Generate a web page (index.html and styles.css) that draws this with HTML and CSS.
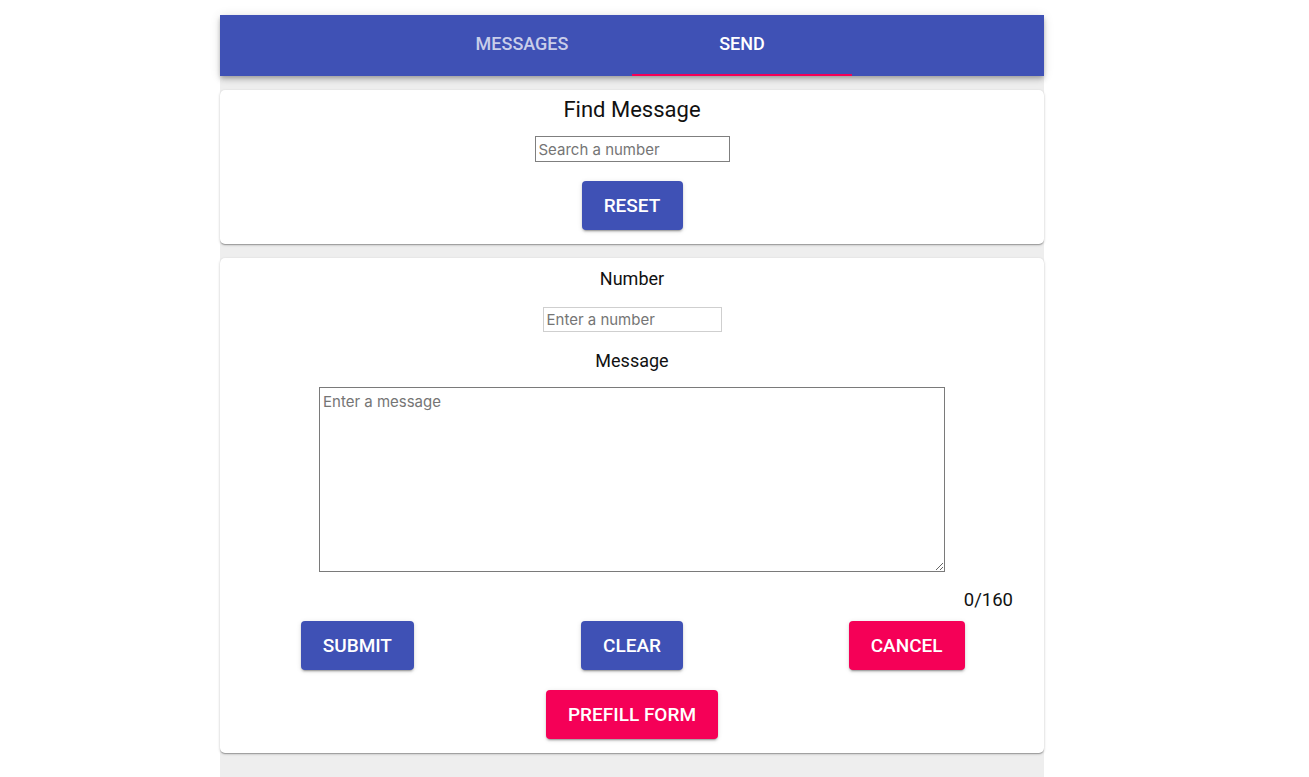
FILE: index.html
```html
<!DOCTYPE html>
<html>
<head>
<meta charset="utf-8">
<link rel="stylesheet" href="styles.css">
</head>
<body>
<div class="page">
  <div class="app">
    <header class="tabbar">
      <div class="tabs">
        <div class="tab">MESSAGES</div>
        <div class="tab tab-active">SEND</div>
      </div>
    </header>
    <main class="content">
      <section class="card card-find">
        <h2 class="card-title">Find Message</h2>
        <input class="field field-search" type="text" placeholder="Search a number">
        <button class="btn btn-primary btn-reset">RESET</button>
      </section>
      <section class="card card-send">
        <label class="label">Number</label>
        <input class="field field-number" type="text" placeholder="Enter a number">
        <label class="label label-message">Message</label>
        <textarea class="message" placeholder="Enter a message"></textarea>
        <div class="counter-row"><span class="counter">0/160</span></div>
        <div class="actions">
          <div class="cell"><button class="btn btn-primary">SUBMIT</button></div>
          <div class="cell"><button class="btn btn-primary">CLEAR</button></div>
          <div class="cell"><button class="btn btn-secondary">CANCEL</button></div>
        </div>
        <div class="prefill-row"><button class="btn btn-secondary">PREFILL FORM</button></div>
      </section>
    </main>
  </div>
</div>
</body>
</html>
```

FILE: styles.css
```css
html, body {
  margin: 0;
  padding: 0;
  background: #ffffff;
}

body {
  font-family: Roboto, "Liberation Sans", sans-serif;
  color: #111;
}

.page {
  width: 1264px;
  padding-top: 15px;
}

.app {
  width: 824px;
  margin: 0 auto;
  background: #eeeeee;
  min-height: 762px;
}

.tabbar {
  height: 61px;
  background: #3f51b5;
  box-shadow: 0 2px 4px -1px rgba(0,0,0,0.2), 0 4px 5px 0 rgba(0,0,0,0.14), 0 1px 10px 0 rgba(0,0,0,0.12);
  display: flex;
  justify-content: center;
  position: relative;
  z-index: 1;
}

.tabs {
  display: flex;
  height: 100%;
}

.tab {
  width: 220px;
  height: 100%;
  box-sizing: border-box;
  display: flex;
  align-items: center;
  justify-content: center;
  font-size: 18px;
  font-weight: 500;
  color: rgba(255,255,255,0.72);
  padding-bottom: 5px;
}

.tab-active {
  color: #ffffff;
  border-bottom: 2px solid #f50057;
  padding-bottom: 3px;
}

.content {
  padding-top: 14px;
  display: flex;
  flex-direction: column;
  gap: 14px;
}

.card {
  background: #ffffff;
  border-radius: 5px;
  box-shadow: 0 1px 3px 0 rgba(0,0,0,0.2), 0 1px 1px 0 rgba(0,0,0,0.14), 0 2px 1px -1px rgba(0,0,0,0.12);
  display: flex;
  flex-direction: column;
  align-items: center;
}

.card-find {
  padding: 6px 0 14px;
}

.card-title {
  margin: 0;
  font-size: 22px;
  line-height: 28px;
  font-weight: 400;
}

.field {
  box-sizing: border-box;
  font-family: Inter, "Noto Sans", sans-serif;
  font-size: 15px;
  padding: 0 3px;
  color: #333;
  outline: none;
}

.field::placeholder,
.message::placeholder {
  color: #757575;
}

.field-search {
  margin-top: 12px;
  width: 195px;
  height: 26px;
  border: 1px solid #7f7f7f;
}

.btn {
  font-family: Roboto, "Liberation Sans", sans-serif;
  font-size: 19px;
  font-weight: 500;
  color: #ffffff;
  border: none;
  border-radius: 4px;
  height: 49px;
  padding: 0 22px;
  box-shadow: 0 3px 1px -2px rgba(0,0,0,0.2), 0 2px 2px 0 rgba(0,0,0,0.14), 0 1px 5px 0 rgba(0,0,0,0.12);
  cursor: pointer;
}

.btn-primary {
  background: #3f51b5;
}

.btn-secondary {
  background: #f50057;
}

.btn-reset {
  margin-top: 19px;
  width: 101px;
  padding: 0;
}

.card-send {
  padding: 9px 0 14px;
}

.label {
  font-size: 18px;
  line-height: 24px;
}

.field-number {
  margin-top: 16px;
  width: 179px;
  height: 25px;
  border: 1px solid #cfcfcf;
}

.label-message {
  margin-top: 17px;
}

.message {
  margin-top: 14px;
  width: 626px;
  height: 185px;
  box-sizing: border-box;
  border: 1px solid #7a7a7a;
  font-family: Inter, "Noto Sans", sans-serif;
  font-size: 15px;
  padding: 4px 3px;
  resize: both;
  outline: none;
}

.counter-row {
  align-self: stretch;
  display: flex;
  justify-content: flex-end;
  padding-right: 31px;
  margin-top: 16px;
}

.counter {
  font-size: 18.5px;
  line-height: 24px;
}

.actions {
  align-self: stretch;
  display: grid;
  grid-template-columns: repeat(3, 1fr);
  margin-top: 9px;
}

.cell {
  display: flex;
  justify-content: center;
}

.prefill-row {
  margin-top: 20px;
}
```
